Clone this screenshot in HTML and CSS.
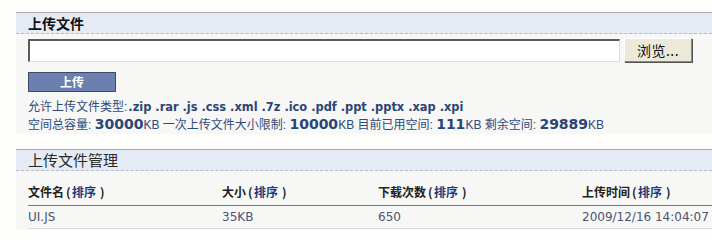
FILE: index.html
```html
<!DOCTYPE html>
<html lang="zh-CN">
<head>
<meta charset="utf-8">
<title>上传文件</title>
<link rel="stylesheet" href="styles.css">
</head>
<body>
<div class="page">
  <section class="section">
    <h2 class="sec-head bold">上传文件</h2>
    <div class="sec-body">
      <div class="file-row">
        <span class="file-input"></span>
        <span class="browse">浏览...</span>
      </div>
      <div class="upload">上传</div>
      <p class="info">允许上传文件类型:<b class="ext">.zip .rar .js .css .xml .7z .ico .pdf .ppt .pptx .xap .xpi</b></p>
      <p class="info">空间总容量: <b>30000</b>KB 一次上传文件大小限制: <b>10000</b>KB 目前已用空间: <b>111</b>KB 剩余空间: <b>29889</b>KB</p>
    </div>
  </section>
  <section class="section second">
    <h2 class="sec-head big">上传文件管理</h2>
    <div class="table">
      <div class="row head">
        <span>文件名<i class="po">(</i><a>排序</a><i class="pc">)</i></span>
        <span>大小<i class="po">(</i><a>排序</a><i class="pc">)</i></span>
        <span>下载次数<i class="po">(</i><a>排序</a><i class="pc">)</i></span>
        <span>上传时间<i class="po">(</i><a>排序</a><i class="pc">)</i></span>
      </div>
      <div class="row data">
        <span>UI.JS</span>
        <span>35KB</span>
        <span>650</span>
        <span>2009/12/16 14:04:07</span>
      </div>
    </div>
  </section>
</div>
</body>
</html>
```
FILE: styles.css
```css
html, body {
  margin: 0;
  padding: 0;
  background: #fdfdfb;
  overflow: hidden;
}
body {
  font-family: "Liberation Sans", "Noto Sans CJK SC", sans-serif;
  font-size: 12px;
  color: #333;
}
.page {
  padding: 12px 0 0 16px;
  background: #fdfdfb;
}
.section {
  background: #f7f7f5;
}
.sec-head {
  margin: 0;
  height: 20px;
  line-height: 20px;
  padding-left: 12px;
  border-top: 1px solid #a8a8a8;
  border-bottom: 1px dashed #b4bccb;
  background: #e5ebf5;
  font-size: 14px;
  font-weight: normal;
  color: #222;
  font-family: "Noto Sans CJK SC", sans-serif;
  white-space: nowrap;
}
.sec-head.bold {
  font-weight: bold;
  color: #111;
}
.sec-head.big {
  font-size: 15px;
  color: #2a2a2a;
}
.sec-body {
  padding: 4px 0 0 12px;
}
.file-row {
  display: flex;
  align-items: center;
  height: 24px;
}
.file-input {
  display: block;
  width: 589px;
  height: 20px;
  background: #fff;
  border-top: 2px solid #5a5a5a;
  border-left: 2px solid #5a5a5a;
  border-right: 1px solid #e0ddd4;
  border-bottom: 1px solid #e0ddd4;
}
.browse {
  display: block;
  margin-left: 4px;
  width: 66px;
  height: 22px;
  line-height: 22px;
  text-align: center;
  background: #ece9d8;
  border: 1px solid #fff;
  border-right-color: #8a877c;
  border-bottom-color: #8a877c;
  box-shadow: 1px 1px 0 #555;
  font-size: 14px;
  letter-spacing: 0.5px;
  color: #111;
  font-family: "Noto Sans CJK SC", sans-serif;
}
.upload {
  margin-top: 10px;
  width: 86px;
  height: 18px;
  line-height: 18px;
  background: #6b80ae;
  border: 1px solid #3e4a66;
  color: #fff;
  font-weight: bold;
  text-align: center;
  font-family: "Noto Sans CJK SC", sans-serif;
}
.info {
  margin: 0;
  line-height: 17px;
  color: #2c4a7c;
  font-size: 12px;
  white-space: nowrap;
}
.upload + .info {
  margin-top: 7px;
}
.info b {
  font-family: "DejaVu Sans", sans-serif;
  font-size: 14px;
  color: #2a4676;
}
.info b.ext {
  font-size: 11.4px;
  margin-left: 1px;
}
.second {
  margin-top: 15px;
}
.table {
  padding: 8px 0 0 12px;
  width: 800px;
}
.row {
  display: grid;
  grid-template-columns: 194px 156px 204px 220px;
  white-space: nowrap;
}
.row.head {
  height: 26px;
  line-height: 26px;
  font-weight: bold;
  color: #222;
  border-bottom: 1px solid #6e7891;
  font-family: "Noto Sans CJK SC", sans-serif;
}
.row.head a {
  color: #1a3a7a;
}
.row.head i {
  font-style: normal;
  display: inline-block;
}
.row.head .po {
  width: 8px;
  padding-left: 2px;
  box-sizing: border-box;
}
.row.head .pc {
  width: 9px;
  padding-left: 4px;
  box-sizing: border-box;
}
.row.data {
  height: 22px;
  line-height: 22px;
  border-bottom: 1px solid #dcdcdc;
  color: #4a5570;
  font-family: "DejaVu Sans", sans-serif;
  font-size: 12px;
}
```
